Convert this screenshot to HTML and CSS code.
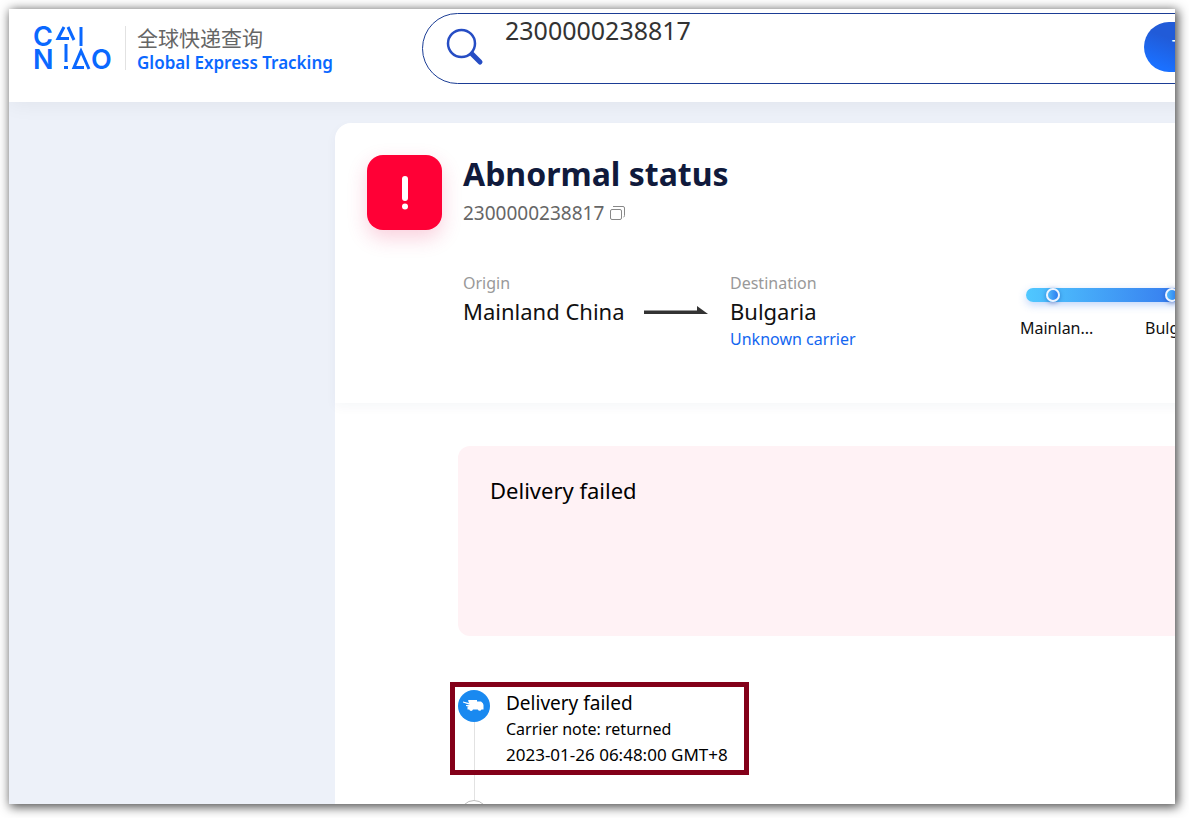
FILE: index.html
```
<!DOCTYPE html>
<html lang="en">
<head>
  <meta charset="UTF-8" />
  <meta name="viewport" content="width=device-width, initial-scale=1.0" />
  <title>Global Express Tracking</title>
  <link rel="stylesheet" href="styles.css">
</head>
<body>
  <div class="window">
    <header class="topbar">
      <a class="brand" href="#" aria-label="Cainiao">
        <svg class="logo" width="78" height="44" viewBox="0 0 78 44">
          <g class="logo-letters">
            <text x="-2" y="20">C</text>
            <text x="-2" y="43">N</text>
            <text x="56" y="43">O</text>
          </g>
          <g fill="none" stroke="#0a68ff" stroke-width="3">
            <path d="M29 1 23 12.500H34M33 1 39 14" />
            <path d="M46 1V20" />
            <path d="M31 18V36M29 41.500H33" />
            <path d="M54 43 46 25 39 41.500H49" />
          </g>
        </svg>
        <span class="brand-text">
          <span class="brand-cn" lang="zh">全球快递查询</span>
          <span class="brand-en">Global Express Tracking</span>
        </span>
      </a>
      <form class="search">
        <svg class="search-icon" width="38" height="38" viewBox="0 0 38 38" fill="none" stroke="#264dc4">
          <circle cx="15.500" cy="15.500" r="13.500" stroke-width="2.500" />
          <path d="M26 26 34 34" stroke-width="5" stroke-linecap="round" />
        </svg>
        <textarea class="search-input" aria-label="Tracking number" rows="1">2300000238817</textarea>
        <button class="search-btn" type="button">Track</button>
      </form>
    </header>

    <main class="card">
      <section class="summary">
        <div class="status-icon">
          <svg width="12" height="36" viewBox="0 0 12 36" fill="#fff">
            <rect x="3" y="1" width="6" height="25" rx="3" />
            <circle cx="6" cy="31.500" r="3" />
          </svg>
        </div>
        <div class="summary-body">
          <h1>Abnormal status</h1>
          <div class="number">
            <span>2300000238817</span>
            <button class="copy" type="button" aria-label="Copy">
              <svg width="15" height="14" viewBox="0 0 15 14" fill="none" stroke="#888">
                <rect x=".5" y="3.500" width="11" height="10" rx="1.500" />
                <path d="M3 .5H13Q14.500 .5 14.500 2V9.500Q14.500 11 13.500 11" />
              </svg>
            </button>
          </div>
          <div class="route">
            <div class="origin">
              <div class="label">Origin</div>
              <div class="place">Mainland China</div>
            </div>
            <svg class="arrow" width="64" height="9" viewBox="0 0 64 9" fill="#333">
              <path d="M0 4.500H53V0L64 8H0Z" />
            </svg>
            <div class="destination">
              <div class="label">Destination</div>
              <div class="place">Bulgaria</div>
              <a class="carrier" href="#">Unknown carrier</a>
            </div>
            <div class="progress">
              <div class="bar">
                <span class="dot"></span>
                <span class="dot"></span>
              </div>
              <div class="stops">
                <span>Mainlan...</span>
                <span>Bulgaria</span>
              </div>
            </div>
          </div>
        </div>
      </section>

      <section class="details">
        <div class="notice">Delivery failed</div>
        <ol class="timeline">
          <li class="event marked">
            <div class="track">
              <span class="marker">
                <svg width="22" height="14" viewBox="0 0 22 14" fill="#fff">
                  <path d="M5 1.500Q5 1 6 1H14V2.500H18Q20.500 4 20.500 6V10.500H18.500A2 2 0 0 1 14.800 10.500H10A2 2 0 0 1 6.200 10.500H4.500V8H6L3 7V6H7L0 3.500V2.500L6 4Z" />
                </svg>
              </span>
            </div>
            <div class="event-text">
              <div class="event-title">Delivery failed</div>
              <div class="event-line">Carrier note: returned</div>
              <time class="event-time">2023-01-26 06:48:00 GMT+8</time>
            </div>
          </li>
          <li class="event">
            <div class="track"><span class="marker past"></span></div>
          </li>
        </ol>
      </section>
    </main>
  </div>
</body>
</html>
```

FILE: styles.css
```
:root {
  --blue: #0a68ff;
  --bg: #edf1f9;
  --alert: #ff0036;
  --mark: #830019;
}

*, *::before, *::after {
  box-sizing: border-box;
}

body {
  margin: 0;
  padding: 9px 14px 14px 9px;
  background: #fff;
  color: #111;
  font-family: "Noto Sans", "Noto Sans CJK SC", sans-serif;
}

.window {
  height: calc(100vh - 23px);
  overflow: hidden;
  background: var(--bg);
  box-shadow: 2px 2px 10px 1px rgba(0, 0, 0, 0.7);
}

button {
  border: none;
  cursor: pointer;
}

/* header */
.topbar {
  display: flex;
  align-items: flex-start;
  height: 93px;
  margin-right: -140px;
  padding: 4px 0 0 26px;
  background: #fff;
  box-shadow: 0 2px 20px rgba(0, 0, 0, 0.06);
}

.brand {
  display: flex;
  width: 387px;
  padding-top: 13px;
  text-decoration: none;
}

.logo {
  overflow: visible;
}

.logo-letters {
  fill: var(--blue);
  font-family: Inter, sans-serif;
  font-size: 27px;
  font-weight: 600;
}

.brand-text {
  display: flex;
  flex-direction: column;
  height: 44px;
  margin-left: 12px;
  padding-left: 11px;
  border-left: 1px solid #e2e2e2;
}

.brand-cn {
  color: #666;
  font-family: "Noto Sans CJK SC", sans-serif;
  font-size: 21px;
  line-height: 22px;
}

.brand-en {
  color: var(--blue);
  font-size: 17px;
  font-weight: 600;
  line-height: 30px;
}

.search {
  display: flex;
  flex: 1;
  height: 71px;
  padding: 0 10px 0 23px;
  border: 1px solid #1b3d95;
  border-radius: 36px;
}

.search-icon {
  margin-top: 14px;
}

.search-input {
  flex: 1;
  height: 36px;
  margin-left: 21px;
  padding: 0;
  border: none;
  outline: none;
  resize: none;
  overflow: hidden;
  color: #333;
  background: none;
  font-family: inherit;
  font-size: 25px;
  line-height: 32px;
}

.search-btn {
  width: 160px;
  height: 50px;
  margin-top: 8px;
  padding: 0 28px;
  border-radius: 25px;
  background: linear-gradient(20deg, #1a70ff 10%, #215bd8 40%);
  color: #fff;
  font-family: inherit;
  font-size: 20px;
  line-height: 40px;
  text-align: left;
}

/* result card */
.card {
  margin: 21px -140px 0 326px;
  border-radius: 16px 0 0 0;
  background: #fff;
}

.summary {
  display: flex;
  height: 280px;
  padding: 32px;
  border-radius: 16px 0 0 0;
  box-shadow: 0 4px 12px rgba(20, 40, 90, 0.04);
}

.status-icon {
  display: flex;
  flex: none;
  align-items: center;
  justify-content: center;
  width: 75px;
  height: 75px;
  border-radius: 16px;
  background: var(--alert);
  box-shadow: 0 8px 20px rgba(230, 40, 100, 0.22);
}

.summary-body {
  flex: 1;
  margin-left: 21px;
}

h1 {
  margin: 0;
  color: #101a3c;
  font-size: 32px;
  font-weight: 700;
  line-height: 38px;
}

.number {
  display: flex;
  align-items: center;
  gap: 6px;
  margin-top: 6px;
  color: #666;
  font-size: 19px;
  line-height: 28px;
}

.copy {
  display: flex;
  padding: 0;
  background: none;
}

.route {
  display: flex;
  align-items: flex-start;
  margin-top: 44px;
}

.label {
  color: #999;
  font-size: 16px;
  line-height: 24px;
}

.place {
  font-size: 22px;
  line-height: 32px;
}

.origin {
  width: 181px;
}

.arrow {
  margin-top: 35px;
}

.destination {
  width: 290px;
  margin-left: 22px;
}

.carrier {
  display: block;
  color: #1366f0;
  font-size: 16px;
  line-height: 24px;
  text-decoration: none;
}

.progress {
  flex: 1;
  padding: 17px 0 0 6px;
}

.bar {
  display: flex;
  align-items: center;
  gap: 105px;
  height: 14px;
  padding-left: 20px;
  border-radius: 7px;
  background: linear-gradient(90deg, #50c8ff, #3578ee 160px);
  box-shadow: 0 3px 8px rgba(50, 120, 240, 0.3);
}

.dot {
  width: 14px;
  height: 14px;
  border: 2px solid #eef4ff;
  border-radius: 50%;
  background: linear-gradient(90deg, #50b8fa, #2c7cf0);
  box-shadow: 0 1px 4px rgba(20, 60, 160, 0.5);
}

.stops {
  display: flex;
  margin: 14px 0 0 -6px;
  font-size: 16px;
  line-height: 24px;
}

.stops span {
  width: 125px;
}

/* details */
.details {
  padding: 43px 0 0 123px;
}

.notice {
  height: 190px;
  padding: 28px 32px;
  border-radius: 12px;
  background: #fff2f5;
  color: #000;
  font-size: 22px;
  line-height: 32px;
}

.timeline {
  margin: 54px 0 0;
  padding: 0;
  list-style: none;
}

.event {
  position: relative;
  display: flex;
  gap: 16px;
  min-height: 110px;
}

.track {
  display: flex;
  flex-direction: column;
  align-items: center;
  width: 32px;
}

.track::after {
  content: "";
  flex: 1;
  width: 1px;
  background: #e2e2e2;
}

.marker {
  display: flex;
  align-items: center;
  justify-content: center;
  width: 32px;
  height: 32px;
  border-radius: 50%;
  background: #1989f0;
}

.marker.past {
  width: 28px;
  height: 28px;
  border: 1px solid #bbb;
  background: #fff;
}

.event-text {
  color: #000;
  font-size: 16px;
  line-height: 26px;
}

.event-title {
  font-size: 19px;
}

.event-time {
  font-size: 17px;
}

/* highlight frame over the latest event */
.marked::before {
  content: "";
  position: absolute;
  top: -8px;
  left: -8px;
  width: 299px;
  height: 93px;
  border: 5px solid var(--mark);
}
```
